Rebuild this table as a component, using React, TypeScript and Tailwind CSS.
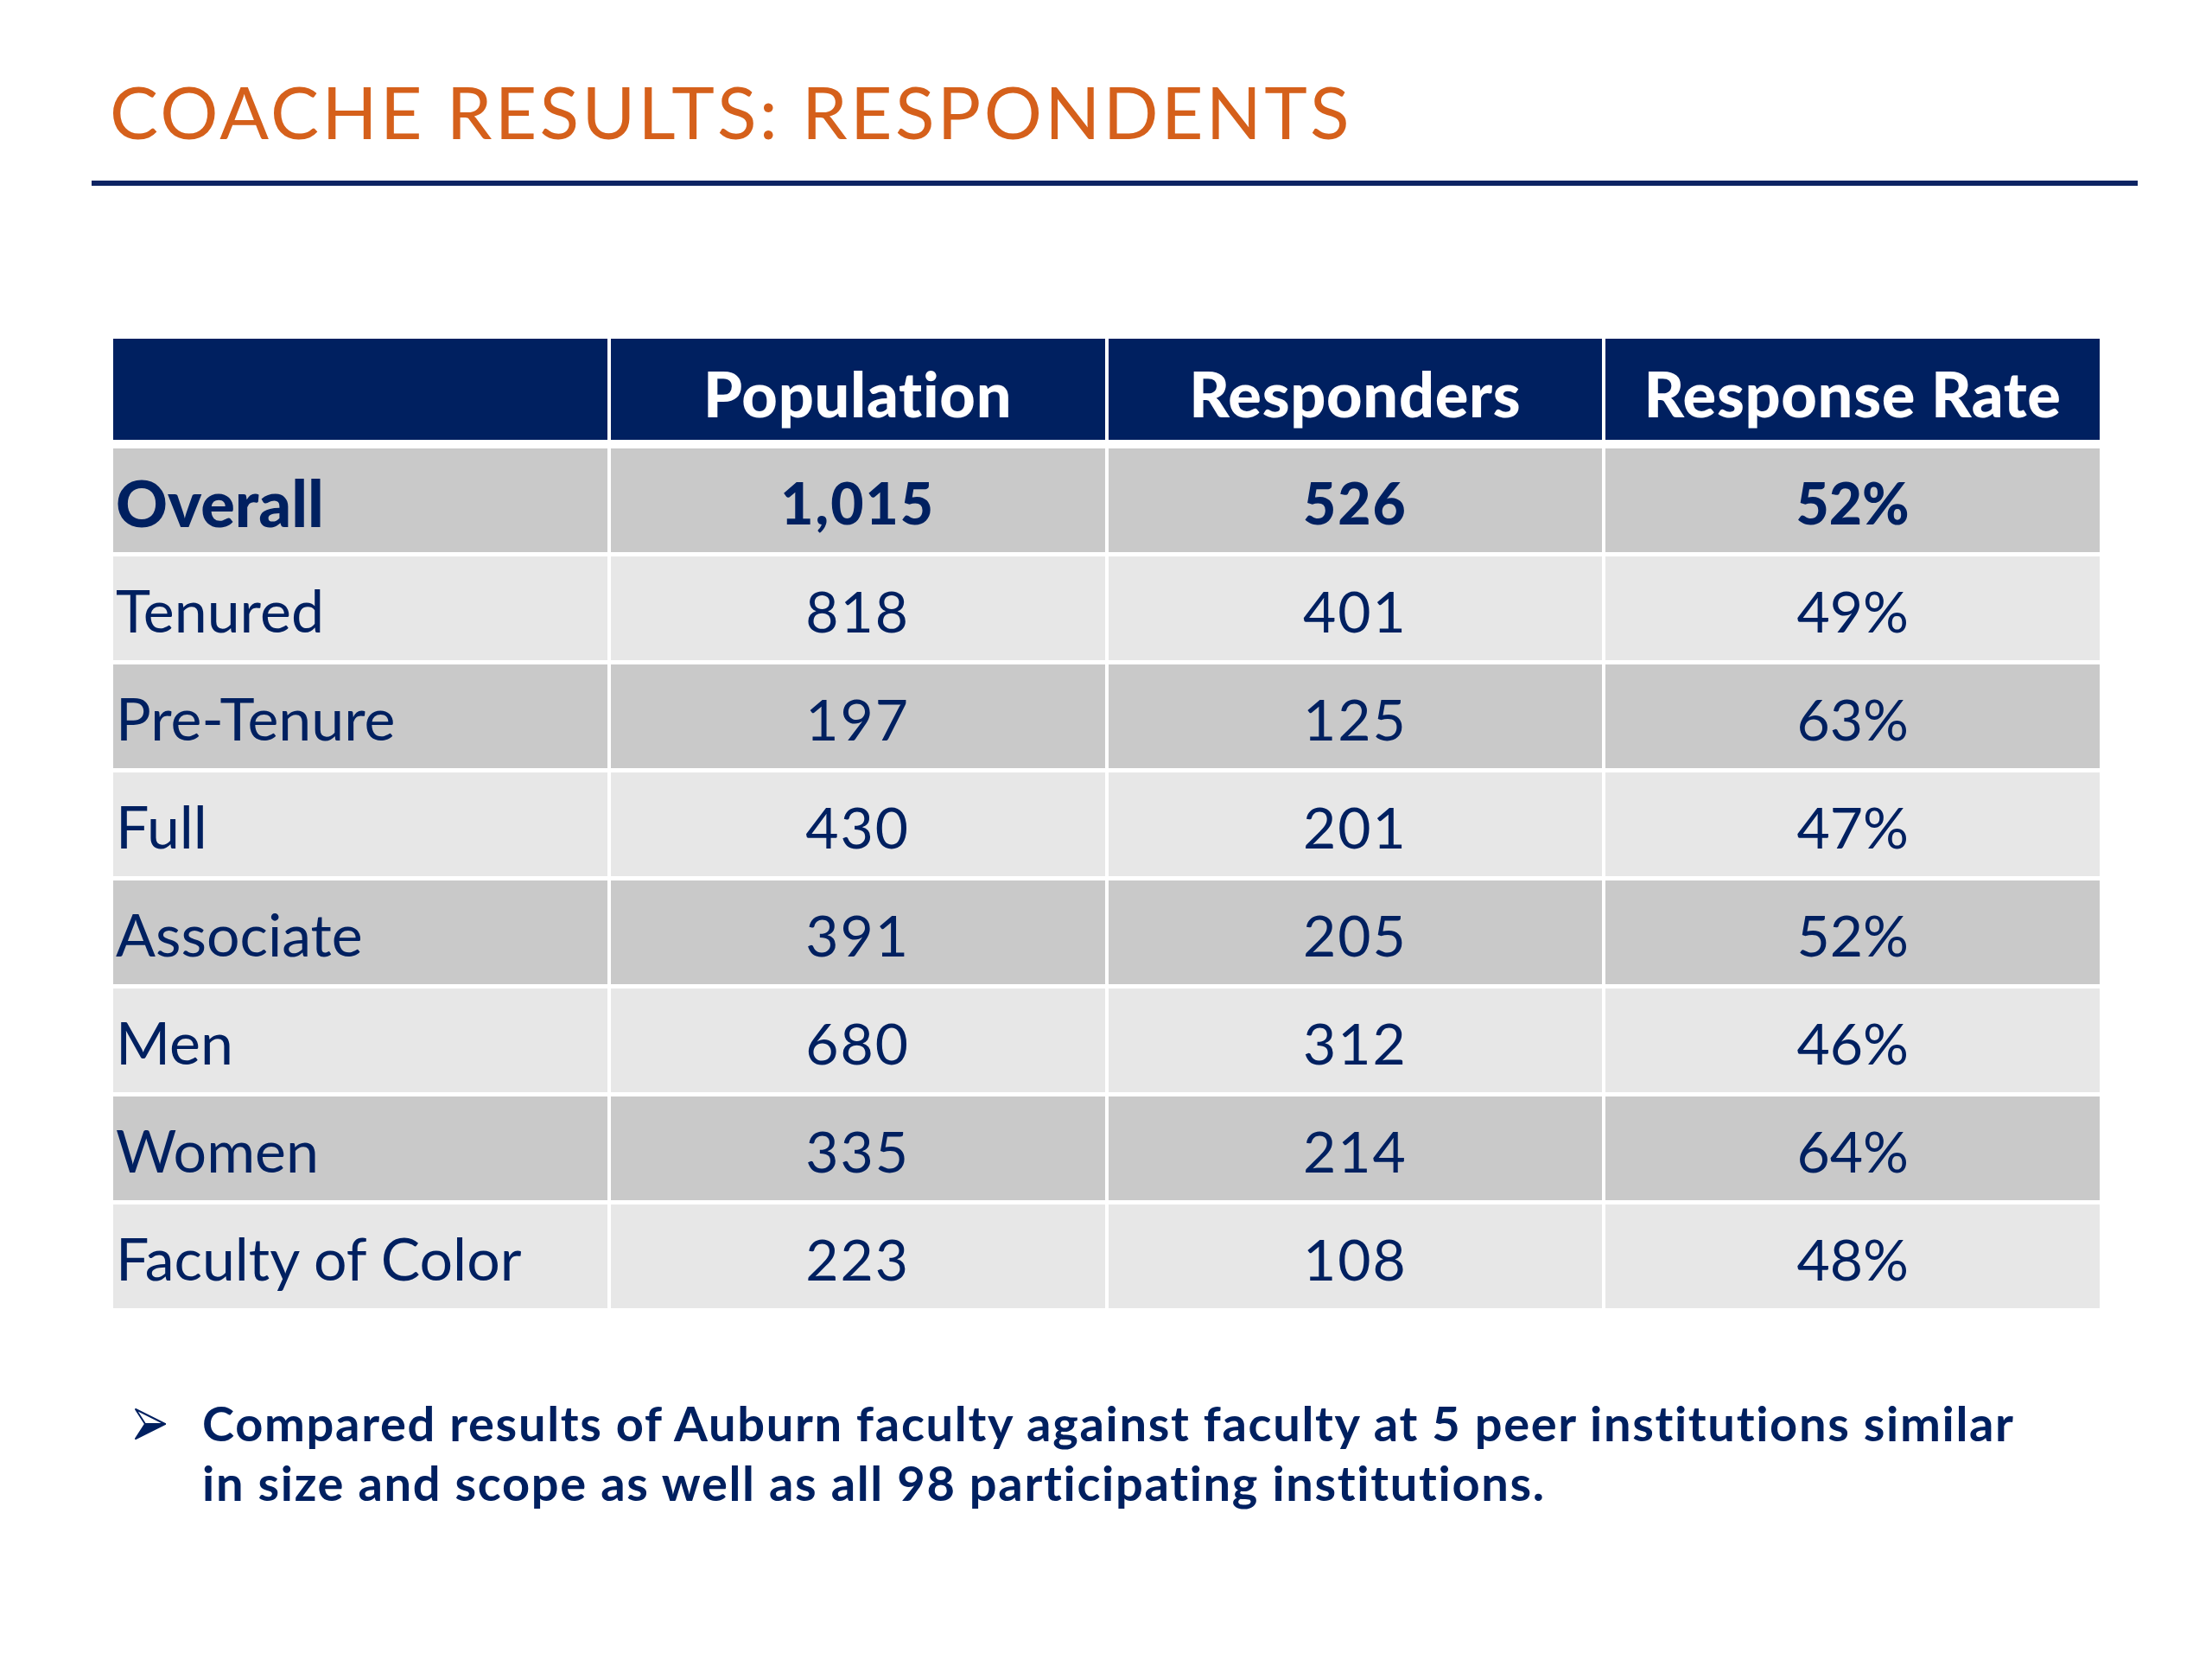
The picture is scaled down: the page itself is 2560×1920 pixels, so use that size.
const rows = [
  { label: "Overall", pop: "1,015", resp: "526", rate: "52%", bold: true },
  { label: "Tenured", pop: "818", resp: "401", rate: "49%" },
  { label: "Pre-Tenure", pop: "197", resp: "125", rate: "63%" },
  { label: "Full", pop: "430", resp: "201", rate: "47%" },
  { label: "Associate", pop: "391", resp: "205", rate: "52%" },
  { label: "Men", pop: "680", resp: "312", rate: "46%" },
  { label: "Women", pop: "335", resp: "214", rate: "64%" },
  { label: "Faculty of Color", pop: "223", resp: "108", rate: "48%" },
];

function Arrow() {
  return (
    <svg width="40" height="38" viewBox="0 0 40 38" className="shrink-0">
      <path d="M3 2 L37 19 L14 19 Z" fill="#ffffff" stroke="#002060" strokeWidth="2" strokeLinejoin="round" />
      <path d="M14 19 L37 19 L3 36 Z" fill="#002060" stroke="#002060" strokeWidth="2" strokeLinejoin="round" />
    </svg>
  );
}

export default function App() {
  return (
    <div className="w-[2560px] h-[1920px] bg-white font-['Lato','Liberation_Sans',sans-serif] text-[#002060]">
      <div className="pl-[106px] pt-[87px]">
        <h1 className="pl-[21px] text-[84px] leading-none tracking-[0.04em] text-[#d5601b] font-normal">
          COACHE RESULTS: RESPONDENTS
        </h1>
        <div className="mt-[38px] h-[6px] w-[2368px] bg-[#0d2463]" />

        <div className="ml-[25px] mt-[177px] w-[2299px]">
          <div className="grid grid-cols-4 gap-x-[4px] h-[117px]">
            <div className="bg-[#002060]" />
            {["Population", "Responders", "Response Rate"].map((h) => (
              <div key={h} className="bg-[#002060] flex items-center justify-center pt-[8px] text-white font-black text-[72px] tracking-[0.01em]">
                {h}
              </div>
            ))}
          </div>
          <div className="mt-[10px] grid grid-cols-4 gap-x-[4px] gap-y-[5px]">
            {rows.map((r, i) => {
              const bg = i % 2 === 0 ? "bg-[#c9c9c9]" : "bg-[#e7e7e7]";
              const weight = r.bold ? "font-black" : "font-normal";
              return [
                <div key={r.label + "l"} className={`${bg} ${weight} h-[120px] flex items-center pl-[3px] pt-[4px] ${r.bold ? "text-[74px]" : "text-[68px]"}`}>
                  {r.label}
                </div>,
                <div key={r.label + "p"} className={`${bg} ${weight} h-[120px] flex items-center justify-center pt-[4px] text-[66px] tracking-[0.03em]`}>
                  {r.pop}
                </div>,
                <div key={r.label + "r"} className={`${bg} ${weight} h-[120px] flex items-center justify-center pt-[4px] text-[66px] tracking-[0.03em]`}>
                  {r.resp}
                </div>,
                <div key={r.label + "t"} className={`${bg} ${weight} h-[120px] flex items-center justify-center pt-[4px] text-[66px]`}>
                  {r.rate}
                </div>,
              ];
            })}
          </div>
        </div>

        <div className="ml-[48px] mt-[98px] flex items-start gap-[40px]">
          <div className="pt-[17px]">
            <Arrow />
          </div>
          <p className="w-[2250px] font-bold text-[56px] leading-[69px] tracking-[0.03em]">
            Compared results of Auburn faculty against faculty at 5 peer institutions similar
            <br />
            in size and scope as well as all 98 participating institutions.
          </p>
        </div>
      </div>
    </div>
  );
}
